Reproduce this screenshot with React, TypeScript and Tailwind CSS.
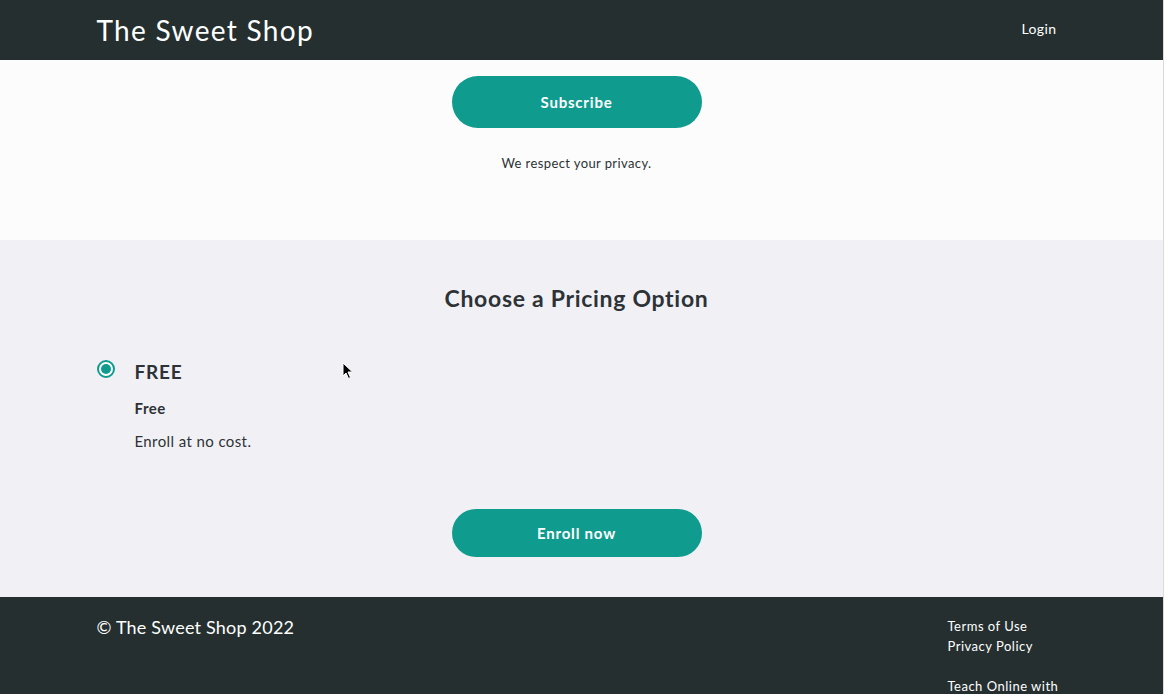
export default function App() {
  return (
    <div
      className="relative w-[1164px] min-h-[694px] border-r border-[#d9d9de] text-[#2d3236]"
      style={{ fontFamily: "Lato, 'Open Sans', sans-serif" }}
    >
      <header className="h-[60px] bg-[#252f30] text-white">
        <div className="mx-auto flex h-full w-[970px] items-center justify-between">
          <a href="#" className="text-[28px] leading-none tracking-[1.3px]">
            The Sweet Shop
          </a>
          <a href="#" className="mb-[3px] mr-[10px] text-[14px] tracking-[0.4px]">
            Login
          </a>
        </div>
      </header>

      <section className="flex h-[180px] flex-col items-center bg-[#fcfcfd] pr-[10px] pt-[16px]">
        <button className="h-[52px] w-[250px] rounded-full bg-[#0f9b8e] text-[15px] font-bold tracking-[0.8px] text-white">
          Subscribe
        </button>
        <p className="mt-[26px] text-[13px] tracking-[0.4px]">We respect your privacy.</p>
      </section>

      <section className="h-[357px] bg-[#f1f1f5]">
        <div className="mx-auto w-[970px] pt-[43px]">
          <h2 className="pr-[10px] text-center text-[23px] font-bold leading-[30px] tracking-[0.7px]">
            Choose a Pricing Option
          </h2>
          <div className="mt-[46px] flex gap-[20px]">
            <span className="mt-[1px] flex h-[18px] w-[18px] items-center justify-center rounded-full border-2 border-[#0f9b8e] bg-white">
              <span className="h-[10px] w-[10px] rounded-full bg-[#0f9b8e]" />
            </span>
            <div>
              <div className="text-[19px] font-bold leading-[26px] tracking-[0.8px]">FREE</div>
              <div className="mt-[13px] text-[15px] font-bold leading-[20px] tracking-[0.5px]">Free</div>
              <div className="mt-[13px] text-[15px] leading-[20px] tracking-[0.4px]">Enroll at no cost.</div>
            </div>
          </div>
          <div className="mt-[58px] flex justify-center pr-[10px]">
            <button className="h-[48px] w-[250px] rounded-full bg-[#0f9b8e] text-[15px] font-bold tracking-[0.8px] text-white">
              Enroll now
            </button>
          </div>
        </div>
      </section>

      <footer className="h-[97px] overflow-hidden bg-[#252f30] text-white">
        <div className="mx-auto flex w-[970px] justify-between pt-[18px]">
          <div className="text-[18px] leading-[24px] tracking-[0.2px]">© The Sweet Shop 2022</div>
          <div className="w-[119px] whitespace-nowrap pt-[1px] text-[13px] leading-[20px] tracking-[0.5px]">
            <div>Terms of Use</div>
            <div>Privacy Policy</div>
            <div className="mt-[20px]">Teach Online with</div>
          </div>
        </div>
      </footer>

      <svg
        className="absolute left-[342px] top-[362px]"
        width="12"
        height="18"
        viewBox="0 0 12 18"
      >
        <path d="M1 1 L1 14 L4 11 L6.5 16.5 L8.5 15.5 L6 10 L10.5 10 Z" fill="#000" stroke="#fff" strokeWidth="1" />
      </svg>
    </div>
  );
}
